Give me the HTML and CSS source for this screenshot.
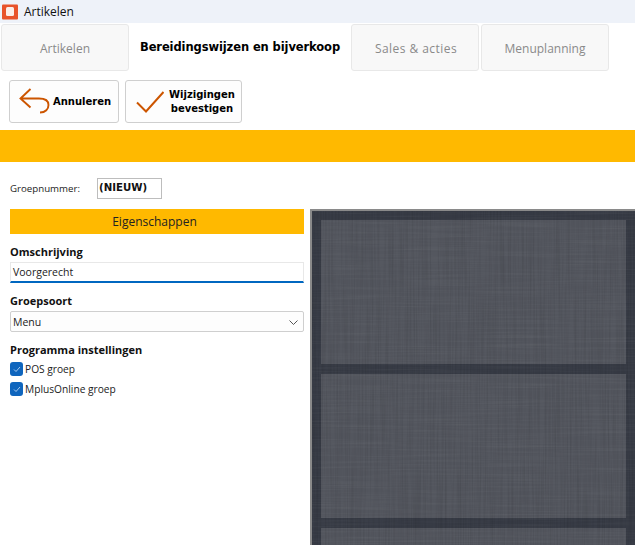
FILE: index.html
```html
<!DOCTYPE html>
<html lang="nl">
<head>
<meta charset="utf-8">
<title>Artikelen</title>
<link rel="stylesheet" href="styles.css">
</head>
<body>
<div class="app">
  <header class="titlebar">
    <svg class="logo" width="16" height="16" viewBox="0 0 16 16"><rect y=".5" width="16" height="15" rx="1" fill="#e8532b"/><rect x="4" y="3" width="8" height="9" rx="1.500" fill="#fbeee9"/></svg>
    <span>Artikelen</span>
  </header>
  <nav class="tabs">
    <div class="tab">Artikelen</div>
    <div class="tab tab-active">Bereidingswijzen en bijverkoop</div>
    <div class="tab tab-wide-text">Sales &amp; acties</div>
    <div class="tab">Menuplanning</div>
  </nav>
  <div class="toolbar">
    <button class="btn btn-cancel">
      <svg width="32" height="28" viewBox="0 0 32 28" fill="none" stroke="#cc5500" stroke-width="1.900"><path d="M11.500 1 1.500 10.500 11.500 19.500M1.500 10.500H20c7 0 9.500 3 9.500 6.500 0 4-3 7.500-8.500 7.500"/></svg>
      <span>Annuleren</span>
    </button>
    <button class="btn btn-confirm">
      <svg width="28" height="22" viewBox="0 0 28 22" fill="none" stroke="#cc5500" stroke-width="2"><path d="M1 11.500 10 20.500 27.500 1"/></svg>
      <span>Wijzigingen<br>bevestigen</span>
    </button>
  </div>
  <div class="band"></div>
  <div class="number-row">
    <label class="number-label">Groepnummer:</label>
    <div class="number-box">(NIEUW)</div>
  </div>
  <main class="content">
    <section class="form">
      <div class="section-bar">Eigenschappen</div>
      <h2 class="field-title title-first">Omschrijving</h2>
      <div class="text-input">Voorgerecht</div>
      <h2 class="field-title title-second">Groepsoort</h2>
      <div class="select">
        <span>Menu</span>
        <svg width="9" height="5" viewBox="0 0 9 5" fill="none" stroke="#555" stroke-width="1"><path d="M.5.500 4.500 4.500 8.500.500"/></svg>
      </div>
      <h2 class="field-title title-third">Programma instellingen</h2>
      <div class="check-row">
        <span class="check"><svg width="14" height="14" viewBox="0 0 14 14" fill="none" stroke="#a9cbef" stroke-width="1"><path d="M4 7.500 6 9.500 10 5"/></svg></span>
        <span>POS groep</span>
      </div>
      <div class="check-row">
        <span class="check"><svg width="14" height="14" viewBox="0 0 14 14" fill="none" stroke="#a9cbef" stroke-width="1"><path d="M4 7.500 6 9.500 10 5"/></svg></span>
        <span>MplusOnline groep</span>
      </div>
    </section>
    <section class="preview">
      <svg class="linen" width="325" height="336">
        <filter id="weave-h" x="0" y="0" width="100%" height="100%"><feTurbulence type="fractalNoise" baseFrequency="0.012 0.6" numOctaves="2" seed="4"/><feColorMatrix values="0 0 0 0 1 0 0 0 0 1 0 0 0 0 1 1.100 0 0 0 -.45"/></filter>
        <filter id="weave-v" x="0" y="0" width="100%" height="100%"><feTurbulence type="fractalNoise" baseFrequency="0.6 0.012" numOctaves="2" seed="9"/><feColorMatrix values="0 0 0 0 0 0 0 0 0 0 0 0 0 0 0 1.100 0 0 0 -.42"/></filter>
        <rect width="325" height="336" filter="url(#weave-h)" opacity=".08"/>
        <rect width="325" height="336" filter="url(#weave-v)" opacity=".16"/>
      </svg>
      <div class="plate"></div>
      <div class="plate"></div>
      <div class="plate"></div>
    </section>
  </main>
</div>
</body>
</html>
```
FILE: styles.css
```css
* { box-sizing: border-box; }
html, body { margin: 0; padding: 0; background: #fff; }
body { font-family: "Open Sans", sans-serif; color: #000; overflow: hidden; }
.app { width: 635px; height: 545px; overflow: hidden; }

.titlebar { height: 23px; background: #eef2f9; display: flex; align-items: center; padding-left: 2px; gap: 6px; font: 12px "Open Sans", sans-serif; color: #111; }
.logo { flex: none; }

.tabs { display: flex; height: 47px; margin-top: 1px; padding-left: 1px; }
.tab { width: 128px; height: 47px; background: #f8f8f8; border: 1px solid #e8e8e8; border-radius: 3px; display: flex; align-items: center; justify-content: center; padding-top: 1px; font: 12px "Open Sans", sans-serif; color: #8a8a8a; }
.tab + .tab { margin-left: 2px; }
.tab-wide-text { letter-spacing: .45px; padding-left: 2px; }
.tab-active { width: 222px; margin: 0 !important; background: #fff; border: 0; color: #000; padding: 0 0 1px; font: bold 11.500px "DejaVu Sans", sans-serif; letter-spacing: -.1px; }
.tab-active + .tab { margin-left: 0; }

.toolbar { display: flex; gap: 6px; height: 43px; margin-top: 9px; padding-left: 9px; }
.btn { height: 43px; background: #fdfdfd; border: 1px solid #cfcfcf; border-radius: 3px; display: flex; align-items: center; padding: 0; font: bold 10px/14px "DejaVu Sans", sans-serif; color: #000; text-align: center; }
.btn-cancel { width: 110px; padding-left: 9px; gap: 2px; }
.btn-confirm { width: 117px; padding-left: 10px; gap: 5px; }

.band { height: 32px; margin-top: 7px; background: #ffb900; }

.number-row { display: flex; align-items: center; height: 21px; margin-top: 16px; padding-left: 10px; }
.number-label { width: 87px; font: 9.700px "Open Sans", sans-serif; color: #222; }
.number-box { width: 65px; height: 21px; border: 1px solid #bdbdbd; padding-left: 1px; font: bold 10.200px/18px "DejaVu Sans", sans-serif; color: #111; }

.content { display: flex; margin-top: 10px; padding-left: 10px; }
.form { width: 294px; flex: none; }
.section-bar { height: 25px; padding-right: 5px; background: #ffb900; text-align: center; font: 12px/25px "Open Sans", sans-serif; color: #222; }
.field-title { margin: 0; font: bold 11px/16px "Open Sans", sans-serif; color: #111; }
.title-first { margin-top: 10px; }
.title-second { margin-top: 10px; }
.title-third { margin-top: 10px; }
.text-input { height: 21px; margin-top: 2px; border: 1px solid #e8e8e8; border-bottom: 2px solid #0067c0; padding-left: 2px; font: 10.500px/18px "Open Sans", sans-serif; color: #222; }
.select { height: 21px; margin-top: 2px; border: 1px solid #cfcfcf; border-radius: 2px; background: #fdfdfd; display: flex; align-items: center; justify-content: space-between; padding: 1px 5px 0 2px; font: 10.500px "Open Sans", sans-serif; color: #222; }
.check-row { display: flex; align-items: center; gap: 2px; height: 14px; font: 10.200px "Open Sans", sans-serif; color: #222; }
.title-third + .check-row { margin-top: 4px; }
.check-row + .check-row { margin-top: 6px; }
.check { width: 13px; height: 14px; flex: none; background: #0f65bd; border-radius: 3px; display: block; }
.check svg { display: block; }

.preview { position: relative; margin-left: 6px; width: 325px; height: 336px; background: #373b45; border-top: 2px solid #8a8a8a; border-left: 2px solid #8a8a8a; padding: 9px 9px 0 9px; overflow: hidden; }
.plate { height: 144px; background: #53565e; margin-bottom: 10px; }
.linen { position: absolute; inset: 0; z-index: 1; pointer-events: none; }
```
